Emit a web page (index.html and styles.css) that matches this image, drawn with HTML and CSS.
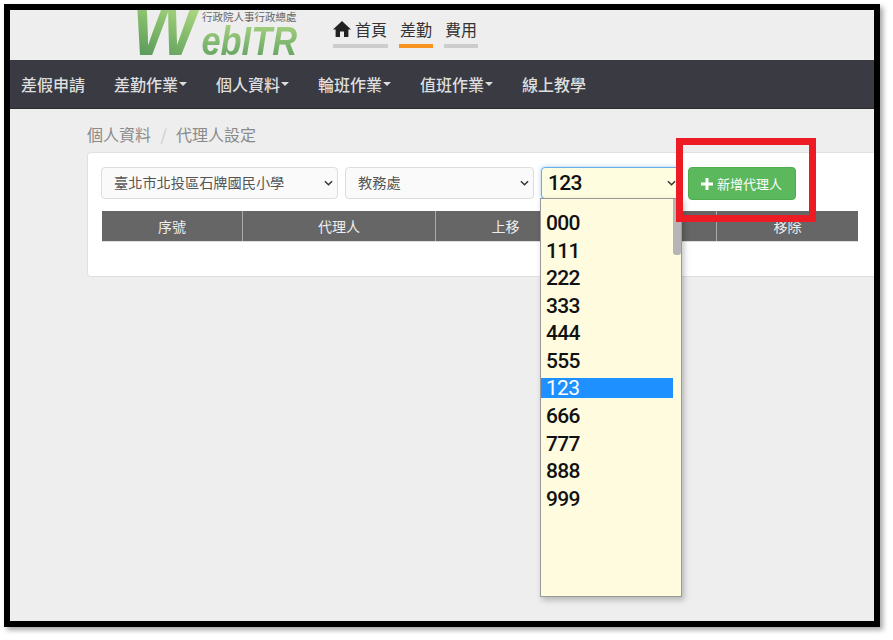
FILE: index.html
```html
<!DOCTYPE html>
<html lang="zh-Hant">
<head>
<meta charset="utf-8">
<title>代理人設定</title>
<link rel="stylesheet" href="styles.css">
</head>
<body>
<div class="frame">
  <header class="top">
    <div class="logo">
      <span class="logo-w">W</span><span class="logo-rest">ebITR</span>
      <span class="logo-org">行政院人事行政總處</span>
    </div>
    <nav class="tabs">
      <a class="tab tab-home"><svg class="home" viewBox="0 0 18 16"><path d="M9 0 L18 8.4 H15.4 V16 H11 V10.5 H7 V16 H2.6 V8.4 H0 Z"/></svg>首頁</a>
      <a class="tab tab-active">差勤</a>
      <a class="tab">費用</a>
    </nav>
  </header>
  <nav class="menu">
    <a class="menu-item">差假申請</a>
    <a class="menu-item">差勤作業<i class="caret"></i></a>
    <a class="menu-item">個人資料<i class="caret"></i></a>
    <a class="menu-item">輪班作業<i class="caret"></i></a>
    <a class="menu-item">值班作業<i class="caret"></i></a>
    <a class="menu-item">線上教學</a>
  </nav>
  <main class="content">
    <div class="crumbs"><span>個人資料</span><span class="sep">/</span><span>代理人設定</span></div>
    <section class="panel">
      <div class="filters">
        <div class="select select-school">臺北市北投區石牌國民小學<svg class="chev" viewBox="0 0 10 6"><path d="M1 1 L5 5 L9 1"/></svg></div>
        <div class="select select-office">教務處<svg class="chev" viewBox="0 0 10 6"><path d="M1 1 L5 5 L9 1"/></svg></div>
        <div class="select select-person">123<svg class="chev" viewBox="0 0 10 6"><path d="M1 1 L5 5 L9 1"/></svg>
          <div class="dropdown">
            <ul class="options">
              <li>000</li><li>111</li><li>222</li><li>333</li><li>444</li><li>555</li>
              <li class="selected">123</li>
              <li>666</li><li>777</li><li>888</li><li>999</li>
            </ul>
            <div class="scrollbar"><div class="thumb"></div></div>
          </div>
        </div>
        <button class="add"><svg class="plus" viewBox="0 0 12 12"><path d="M4.5 0 H7.5 V4.5 H12 V7.5 H7.5 V12 H4.5 V7.5 H0 V4.5 H4.5 Z"/></svg>新增代理人</button>
      </div>
      <div class="thead">
        <div>序號</div><div>代理人</div><div>上移</div><div>下移</div><div>移除</div>
      </div>
    </section>
  </main>
  <div class="callout"></div>
</div>
</body>
</html>
```
FILE: styles.css
```css
* { box-sizing: border-box; }
html, body { margin: 0; padding: 0; background: #fff; }
body { width: 893px; height: 640px; overflow: hidden; font-family: "Noto Sans CJK TC", "Noto Sans", sans-serif; }

.frame {
  position: relative;
  width: 876px;
  height: 623px;
  margin: 4px 0 0 4px;
  border: 6px solid #000;
  background: #eee;
  box-shadow: 3px 3px 5px rgba(0, 0, 0, .35);
}

.top { display: flex; height: 50px; overflow: hidden; }
.logo { position: relative; width: 172px; height: 50px; margin-left: 120px; flex: none; }
.logo-w, .logo-rest {
  position: absolute;
  font-family: "Liberation Sans", sans-serif;
  font-weight: 700;
  font-style: italic;
  color: #7cb568;
  -webkit-background-clip: text;
  background-clip: text;
  -webkit-text-fill-color: transparent;
  white-space: nowrap;
}
.logo-w {
  left: 0;
  bottom: 2px;
  font-size: 80px;
  line-height: 60px;
  padding: 0 8px 0 2px;
  transform: scaleX(.88);
  transform-origin: left bottom;
  background-image: linear-gradient(20deg, #5c9c5c 10%, #84bc6c 50%, #b5dc85 90%);
}
.logo-rest {
  left: 68px;
  bottom: -1px;
  font-size: 40px;
  line-height: 40px;
  padding: 0 4px;
  transform: scaleX(.86);
  transform-origin: left bottom;
  background-image: linear-gradient(180deg, #a3cf80 10%, #6aa865 85%);
}
.logo-org {
  position: absolute;
  left: 72px;
  top: 0;
  font-size: 10.5px;
  line-height: 13px;
  color: #666;
  white-space: nowrap;
}

.tabs { display: flex; gap: 11px; margin-left: 31px; padding-top: 7px; }
.tab {
  display: flex;
  align-items: flex-start;
  height: 31px;
  padding: 0 1px;
  font-size: 16px;
  line-height: 24px;
  color: #333;
  border-bottom: 4px solid #ccc;
  white-space: nowrap;
}
.tab-home { padding: 0; width: 55px; }
.tab-active { border-bottom-color: #f7931e; }
.home { width: 18px; height: 16px; margin: 4px 4px 0 0; fill: #222; }

.menu {
  display: flex;
  align-items: center;
  height: 49px;
  padding-left: 11px;
  gap: 29px;
  background: #393a42;
  border-bottom: 1px solid #2a2a30;
}
.menu-item { display: flex; align-items: center; font-size: 16px; font-weight: 500; color: #dedede; white-space: nowrap; }
.caret { width: 0; height: 0; margin-left: 1px; border: 4px solid transparent; border-top-color: #dedede; border-bottom: 0; }

.content { padding: 13px 0 0 77px; }
.crumbs { display: flex; gap: 9.5px; height: 30px; font-size: 16px; line-height: 24px; color: #8a8a8a; }
.sep { color: #ccc; width: 6px; text-align: center; }

.panel {
  width: 787px;
  height: 125px;
  padding: 14px 0 0 13px;
  background: #fff;
  border: 1px solid #e0e0e0;
  border-right: 0;
  border-radius: 4px 0 0 4px;
}
.filters { display: flex; gap: 7px; }
.select {
  position: relative;
  display: flex;
  align-items: center;
  height: 32px;
  padding: 0 0 2px 12px;
  font-size: 14.2px;
  color: #555;
  background: #fafafa;
  border: 1px solid #ddd;
  border-radius: 4px;
}
.select-school { width: 237px; }
.select-office { width: 189px; }
.select-person {
  width: 140px;
  padding: 0 0 0 6px;
  font-family: Roboto, "Noto Sans", sans-serif;
  font-size: 21px;
  font-weight: 500;
  letter-spacing: -.7px;
  color: #111;
  background: #fffde0;
  border-color: #66afe9;
  box-shadow: 0 0 4px rgba(102, 175, 233, .6);
}
.chev { position: absolute; right: 4px; top: 12px; width: 9px; height: 6px; fill: none; stroke: #333; stroke-width: 1.6; }

.dropdown {
  position: absolute;
  z-index: 2;
  left: -2px;
  top: 30px;
  width: 142px;
  height: 399px;
  display: flex;
  background: #fffbdf;
  border: 1px solid #999;
  box-shadow: 2px 3px 6px rgba(0, 0, 0, .25);
}
.options { flex: 1; margin: 0; padding: 11px 0 0; list-style: none; }
.options li { height: 27.6px; padding-left: 5px; font-size: 21px; line-height: 27.6px; color: #111; }
.options .selected { height: 20px; margin: 2px 0 5.6px; line-height: 20px; color: #fff; background: #1e90ff; font-weight: 400; }
.scrollbar { width: 8px; }
.thumb { height: 56px; background: #b5b5b5; border-radius: 0 0 3px 3px; }

.add {
  display: flex;
  align-items: center;
  gap: 4px;
  width: 108px;
  height: 33px;
  padding: 0 0 0 12px;
  font-family: inherit;
  font-size: 13px;
  color: #fff;
  background: #5cb85c;
  border: 1px solid #4cae4c;
  border-radius: 4px;
}
.plus { width: 12px; height: 12px; fill: #fff; }

.thead {
  display: grid;
  grid-template-columns: 141px 193px 140px 141px 141px;
  width: 756px;
  height: 31px;
  margin: 11px 0 0 1px;
  background: #666;
  border-bottom: 1px solid #ddd;
}
.thead div {
  font-size: 14px;
  line-height: 30px;
  text-align: center;
  color: #eee;
  border-right: 1px solid #aaa;
}
.thead div:last-child { border-right: 0; }

.callout {
  position: absolute;
  left: 666px;
  top: 128px;
  width: 140px;
  height: 84px;
  border: 7px solid #ed1c24;
  z-index: 3;
}
```
